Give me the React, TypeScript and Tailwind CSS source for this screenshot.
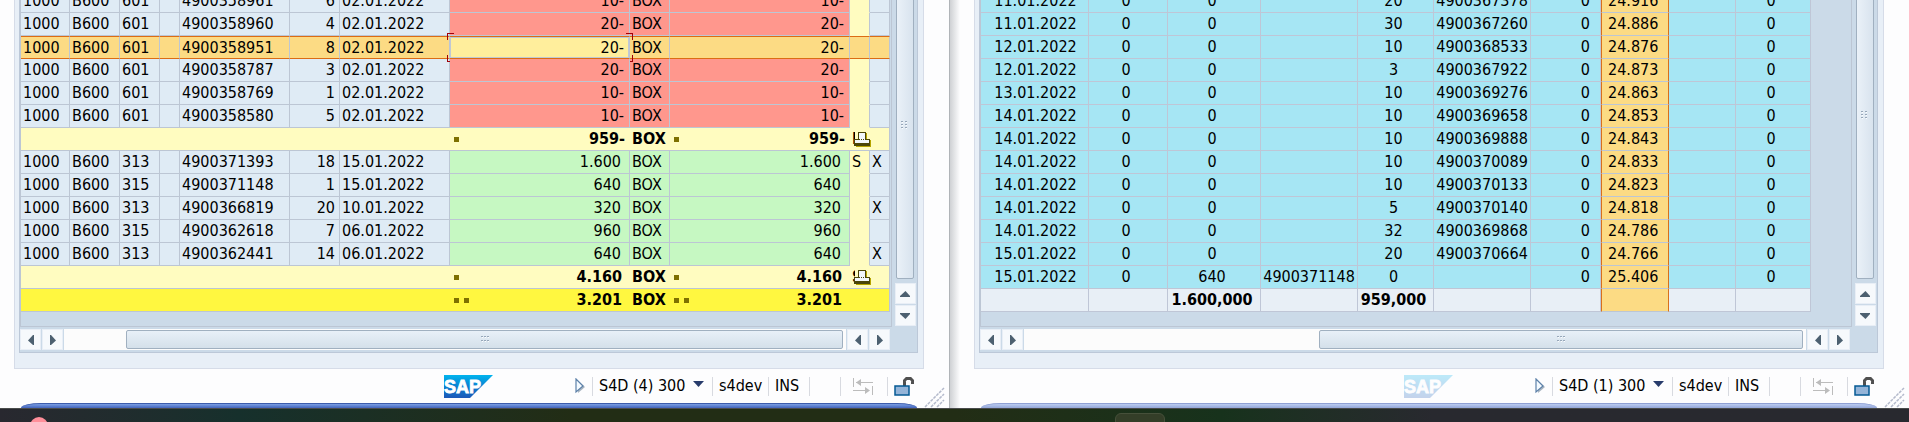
import type { ReactNode } from 'react';

type Movement = {
  type: string;
  doc: string;
  item: string;
  date: string;
  qty: string;
  dc?: string;
  auto?: string;
  selected?: boolean;
};

const ISSUES: Movement[] = [
  { type: '601', doc: '4900358961', item: '6', date: '02.01.2022', qty: '10-' },
  { type: '601', doc: '4900358960', item: '4', date: '02.01.2022', qty: '20-' },
  { type: '601', doc: '4900358951', item: '8', date: '02.01.2022', qty: '20-', selected: true },
  { type: '601', doc: '4900358787', item: '3', date: '02.01.2022', qty: '20-' },
  { type: '601', doc: '4900358769', item: '1', date: '02.01.2022', qty: '10-' },
  { type: '601', doc: '4900358580', item: '5', date: '02.01.2022', qty: '10-' },
];

const RECEIPTS: Movement[] = [
  { type: '313', doc: '4900371393', item: '18', date: '15.01.2022', qty: '1.600', dc: 'S', auto: 'X' },
  { type: '315', doc: '4900371148', item: '1', date: '15.01.2022', qty: '640' },
  { type: '313', doc: '4900366819', item: '20', date: '10.01.2022', qty: '320', auto: 'X' },
  { type: '315', doc: '4900362618', item: '7', date: '06.01.2022', qty: '960' },
  { type: '313', doc: '4900362441', item: '14', date: '06.01.2022', qty: '640', auto: 'X' },
];

// date, opening, received, receipt doc, issued, issue doc, reserved, balance, blank, blocked
const STOCK: string[][] = [
  ['11.01.2022', '0', '0', '', '20', '4900367378', '0', '24.916', '', '0'],
  ['11.01.2022', '0', '0', '', '30', '4900367260', '0', '24.886', '', '0'],
  ['12.01.2022', '0', '0', '', '10', '4900368533', '0', '24.876', '', '0'],
  ['12.01.2022', '0', '0', '', '3', '4900367922', '0', '24.873', '', '0'],
  ['13.01.2022', '0', '0', '', '10', '4900369276', '0', '24.863', '', '0'],
  ['14.01.2022', '0', '0', '', '10', '4900369658', '0', '24.853', '', '0'],
  ['14.01.2022', '0', '0', '', '10', '4900369888', '0', '24.843', '', '0'],
  ['14.01.2022', '0', '0', '', '10', '4900370089', '0', '24.833', '', '0'],
  ['14.01.2022', '0', '0', '', '10', '4900370133', '0', '24.823', '', '0'],
  ['14.01.2022', '0', '0', '', '5', '4900370140', '0', '24.818', '', '0'],
  ['14.01.2022', '0', '0', '', '32', '4900369868', '0', '24.786', '', '0'],
  ['15.01.2022', '0', '0', '', '20', '4900370664', '0', '24.766', '', '0'],
  ['15.01.2022', '0', '640', '4900371148', '0', '', '0', '25.406', '', '0'],
];

const STOCK_TOTAL = ['', '', '1.600,000', '', '959,000', '', '', '', '', ''];

const STOCK_ALIGN = [
  'text-center pl-0.5',
  'text-center pr-1',
  'text-center pr-1',
  'text-center',
  'text-center pr-1',
  'text-center',
  'text-right pr-2.5',
  'text-left pl-1.5',
  'text-left',
  'text-center pr-1',
];

function Squares({ count }: { count: number }) {
  return (
    <span className="flex gap-[5px] pl-1">
      {Array.from({ length: count }, (_, i) => (
        <span key={i} className="size-[5px] bg-[#7d7000]" />
      ))}
    </span>
  );
}

function PrinterIcon() {
  return (
    <svg viewBox="0 0 17 15" className="absolute top-1 left-1 h-[15px] w-[17px]" aria-hidden="true">
      <path d="M1 0h16v15H1z" fill="#fffcc0" />
      <path d="M6 1h7v7h4v7H2v-3h4z" fill="#b5a400" />
      <path d="M4 0h8v7h4v7H0V7h4z" fill="#4a4608" />
      <path d="M5 1h6v7h4v3H1V8h4z" fill="#f2f7fb" />
      <path d="M5 7h1v1H5zM7 7h1v1H7zM9 7h1v1H9z" fill="#4a4608" />
    </svg>
  );
}

function FocusFrame() {
  return (
    <>
      <span className="pointer-events-none absolute inset-0 border border-[#c0c8d4]" />
      <span className="pointer-events-none absolute -top-[4px] -left-[3px] h-[7px] w-[7px] border-t border-l border-[#a00008]" />
      <span className="pointer-events-none absolute -top-[4px] -right-[4px] h-[7px] w-[7px] border-t border-r border-[#a00008]" />
      <span className="pointer-events-none absolute -bottom-[4px] -left-[3px] h-[7px] w-[7px] border-b border-l border-[#a00008]" />
      <span className="pointer-events-none absolute -right-[4px] -bottom-[4px] h-[7px] w-[7px] border-r border-b border-[#a00008]" />
    </>
  );
}

function MovementRow({ row, tone }: { row: Movement; tone: 'red' | 'green' }) {
  const edge = row.selected
    ? 'border-r border-y border-r-[#bcc6d4] border-y-[#dc6c14] leading-[21px]'
    : 'border-r border-b border-[#bcc6d4] leading-[22px]';
  const base = row.selected ? 'bg-[#fcdb84]' : 'bg-[#dfebf5]';
  const qty = row.selected ? 'bg-[#fcdb84]' : tone === 'red' ? 'bg-[#ff978d]' : 'bg-[#c6f8c2]';
  const qtyPad = row.qty.endsWith('-') ? 'pr-[5px]' : 'pr-2';
  const plain = `${edge} ${base} pl-0.5`;
  return (
    <tr>
      <td className={plain}>1000</td>
      <td className={plain}>B600</td>
      <td className={plain}>{row.type}</td>
      <td className={plain} />
      <td className={plain}>{row.doc}</td>
      <td className={`${edge} ${base} pr-1 text-right`}>{row.item}</td>
      <td className={plain}>{row.date}</td>
      <td className={`relative text-right ${edge} ${row.selected ? 'bg-[#ffee9c]' : qty} ${qtyPad}`}>
        {row.qty}
        {row.selected && <FocusFrame />}
      </td>
      <td className={`${edge} ${qty} pl-0.5`}>BOX</td>
      <td className={`${edge} ${qty} ${qtyPad} text-right`}>{row.qty}</td>
      <td
        className={
          row.selected
            ? plain
            : 'border-r border-b border-r-[#bcc6d4] border-b-[#fffcc0] bg-[#fffcc0] pl-0.5 leading-[22px]'
        }
      >
        {row.dc}
      </td>
      <td className={plain}>{row.auto}</td>
    </tr>
  );
}

function SumRow({ value, level, mark }: { value: string; level: 1 | 2; mark?: string }) {
  const fill = level === 2 ? 'bg-[#fff740]' : 'bg-[#fffcc0]';
  const cell = `border-b border-[#bcc6d4] leading-[22px] font-bold ${fill}`;
  const amount = (
    <div className={`flex items-center justify-between ${value.endsWith('-') ? 'pr-[5px]' : 'pr-2'}`}>
      <Squares count={level} />
      <span>{value}</span>
    </div>
  );
  return (
    <tr>
      <td colSpan={7} className={cell} />
      <td className={cell}>{amount}</td>
      <td className={`${cell} pl-0.5`}>BOX</td>
      <td className={cell}>{amount}</td>
      <td colSpan={2} className={`relative border-r pl-0.5 ${cell}`}>
        {mark && (
          <>
            {mark}
            <PrinterIcon />
          </>
        )}
      </td>
    </tr>
  );
}

function MovementTable() {
  return (
    <table aria-label="Material movements" className="w-[869px] table-fixed border-separate border-spacing-0">
      <colgroup>
        <col className="w-[49px]" />
        <col className="w-[50px]" />
        <col className="w-[40px]" />
        <col className="w-[20px]" />
        <col className="w-[110px]" />
        <col className="w-[50px]" />
        <col className="w-[110px]" />
        <col className="w-[180px]" />
        <col className="w-[40px]" />
        <col className="w-[180px]" />
        <col className="w-[20px]" />
        <col className="w-[20px]" />
      </colgroup>
      <tbody>
        {ISSUES.map((row) => (
          <MovementRow key={row.doc} row={row} tone="red" />
        ))}
        <SumRow value="959-" level={1} mark="H" />
        {RECEIPTS.map((row) => (
          <MovementRow key={row.doc} row={row} tone="green" />
        ))}
        <SumRow value="4.160" level={1} mark="S" />
        <SumRow value="3.201" level={2} />
      </tbody>
    </table>
  );
}

function stockEdge(col: number) {
  return col === 7
    ? 'border-x border-b border-x-[#d8701c] border-b-[#bcc6d4] bg-[#fcdb84]'
    : 'border-r border-b border-[#bfc6d6]';
}

function StockTable() {
  return (
    <table aria-label="Stock by day" className="w-[830px] table-fixed border-separate border-spacing-0 leading-[22px]">
      <colgroup>
        <col className="w-[108px]" />
        <col className="w-[79px]" />
        <col className="w-[93px]" />
        <col className="w-[97px]" />
        <col className="w-[76px]" />
        <col className="w-[97px]" />
        <col className="w-[70px]" />
        <col className="w-[68px]" />
        <col className="w-[67px]" />
        <col className="w-[75px]" />
      </colgroup>
      <tbody>
        {STOCK.map((row, r) => (
          <tr key={r} className="bg-[#a6e6f4]">
            {row.map((value, c) => (
              <td key={c} className={`${stockEdge(c)} ${STOCK_ALIGN[c]}`}>
                {value}
              </td>
            ))}
          </tr>
        ))}
        <tr className="h-[23px] bg-[#e8eff6] font-bold">
          {STOCK_TOTAL.map((value, c) => (
            <td key={c} className={`${stockEdge(c)} ${STOCK_ALIGN[c]}`}>
              {value}
            </td>
          ))}
        </tr>
      </tbody>
    </table>
  );
}

const ARROWS = {
  left: 'M9 1v10H8L3 6.500 8 1z',
  right: 'M3 1v10h1l5-4.500L4 1z',
  up: 'M1 9h10V8L6.500 3 1 8z',
  down: 'M1 3h10v1L6.500 9 1 4z',
};

function ScrollButton({ dir }: { dir: keyof typeof ARROWS }) {
  return (
    <button
      type="button"
      aria-label={`Scroll ${dir}`}
      className="flex size-[21px] shrink-0 items-center justify-center border border-[#e8eef6] bg-[#f6f9fc]"
    >
      <svg viewBox="0 0 12 12" className="size-3" aria-hidden="true">
        <path d={ARROWS[dir]} fill="#4c6070" />
      </svg>
    </button>
  );
}

function Grip({ vertical }: { vertical?: boolean }) {
  const xs = vertical ? [0, 4] : [0, 3, 6];
  const ys = vertical ? [0, 3, 6] : [0, 4];
  return (
    <svg viewBox="0 0 8 8" className="size-2" aria-hidden="true">
      {xs.map((x) =>
        ys.map((y) => (
          <g key={`${x}-${y}`}>
            <rect x={x + 1} y={y + 1} width="1" height="1" fill="#fff" />
            <rect x={x} y={y} width="2" height="1" fill="#98a8ba" />
          </g>
        )),
      )}
    </svg>
  );
}

function SapLogo({ faded }: { faded: boolean }) {
  return (
    <svg viewBox="0 0 49 23" className={`h-[23px] w-[49px] ${faded ? 'opacity-25' : ''}`} role="img" aria-label="SAP">
      <defs>
        <linearGradient id="sap" x1="0" y1="0" x2="0" y2="1">
          <stop offset="0" stopColor="#00b4ee" />
          <stop offset="0.5" stopColor="#0c80d0" />
          <stop offset="1" stopColor="#1c58b8" />
        </linearGradient>
      </defs>
      <path d="M0 0h49L26 23H0z" fill="url(#sap)" />
      <text
        x="0"
        y="18"
        fontFamily="Liberation Sans, sans-serif"
        fontWeight="700"
        fontSize="18"
        fill="#fff"
        stroke="#fff"
        strokeWidth="0.800"
      >
        SAP
      </text>
    </svg>
  );
}

function Field({ className, children }: { className: string; children?: ReactNode }) {
  return (
    <div className={`flex h-[19px] items-center border-l border-[#d8dae0] ${className}`}>{children}</div>
  );
}

function StatusBar({ session, faded }: { session: string; faded: boolean }) {
  return (
    <footer className="flex h-[34px] shrink-0 items-center justify-end">
      <div className="mr-[82px]">
        <SapLogo faded={faded} />
      </div>
      <button type="button" aria-label="Expand status bar" className="w-[17px]">
        <svg viewBox="0 0 11 16" className="h-4 w-[11px]" aria-hidden="true">
          <path d="M2 2l8 7-7 6z" fill="#a8b4c0" />
          <path d="M1 1l7 7-7 6z" fill="#f4faff" stroke="#5c80a8" strokeWidth="1.200" />
        </svg>
      </button>
      <Field className="w-[120px] pl-1.5">
        <select aria-label="System" className="w-[94px] appearance-none bg-transparent outline-none">
          <option>{session}</option>
        </select>
        <svg viewBox="0 0 11 6" className="mb-1 h-1.5 w-[11px]" aria-hidden="true">
          <path d="M0 0h11L5.500 6z" fill="#283c6c" />
        </svg>
      </Field>
      <Field className="w-[56px] pl-1.5">s4dev</Field>
      <Field className="w-[41px] pl-1.5">INS</Field>
      <Field className="w-[31px]" />
      <Field className="w-[47px] pl-3">
        <svg viewBox="0 0 21 17" className="h-[17px] w-[21px]" aria-hidden="true">
          <path d="M.5 0v9M19.500 8v9M3 4.500h17M0 12.500h16" stroke="#bcbcbc" fill="none" />
          <path d="M3 4.500L8 1v7zM17 12.500L12 9v7z" fill="#bcbcbc" />
        </svg>
      </Field>
      <Field className="w-[37px] pl-1.5">
        <svg viewBox="0 0 21 19" className="h-[19px] w-[21px]" aria-hidden="true">
          <path d="M10.500 9V3.500l2-2h4l2 2V7" fill="none" stroke="#505050" strokeWidth="3" />
          <rect x="1" y="9" width="14" height="9" fill="#94b4d8" stroke="#045a94" strokeWidth="1.500" />
        </svg>
      </Field>
    </footer>
  );
}

type WindowProps = {
  session: string;
  faded?: boolean;
  className: string;
  track: string;
  thumb: string;
  children: ReactNode;
};

function SapWindow({ session, faded = false, className, track, thumb, children }: WindowProps) {
  return (
    <section aria-label={session} className={`relative flex min-h-0 min-w-0 flex-col bg-[#fdfdfe] ${className}`}>
      <div className="flex min-h-0 flex-1 flex-col border-x border-b border-[#d6dce8] bg-[#e8eff7] pr-[5px] pb-[15px] pl-1">
        <div className="flex min-h-0 flex-1 flex-col border-r border-b border-l border-[#bcc8d8] bg-[#cbdae8]">
          <div className="flex min-h-0 flex-1 overflow-hidden">
            <div className="flex min-w-0 flex-1 flex-col justify-end border-r border-b border-l border-[#bcc6d4] pb-3.5">
              {children}
            </div>
            <div className="flex w-[25px] shrink-0 flex-col items-center pl-px">
              <div
                className={`flex w-[18px] flex-1 items-center justify-center rounded-xs border border-[#a0b0c0] bg-linear-to-r from-[#eaf1f8] to-[#d8e3ee] ${track}`}
              >
                <Grip vertical />
              </div>
              <div className="mt-1 mb-px flex flex-col gap-px">
                <ScrollButton dir="up" />
                <ScrollButton dir="down" />
              </div>
            </div>
          </div>
          <div className="flex h-[25px] shrink-0 items-center gap-px pr-[27px]">
            <ScrollButton dir="left" />
            <ScrollButton dir="right" />
            <div className="flex h-[21px] flex-1 items-center bg-[#fcfcfc] pr-[3px]">
              <div
                className={`flex h-[19px] items-center justify-center rounded-xs border border-[#a0b0c0] bg-linear-to-b from-[#e8f0f8] to-[#d4e0ea] ${thumb}`}
              >
                <Grip />
              </div>
            </div>
            <ScrollButton dir="left" />
            <ScrollButton dir="right" />
          </div>
        </div>
      </div>
      <StatusBar session={session} faded={faded} />
      <div
        className={`mx-[7px] h-[5px] shrink-0 rounded-t-[20px_5px] border-t ${
          faded
            ? 'border-[#8fa0d4] bg-linear-to-b from-[#bccdf2] to-[#94a6d8]'
            : 'border-[#3c5cac] bg-linear-to-b from-[#7c9fe4] to-[#4364bc]'
        }`}
      />
      <svg viewBox="0 0 21 21" className="absolute right-1 bottom-0 size-[21px]" aria-hidden="true">
        <path d="M1 20L20 1M7 20L20 7M13 20l7-7" stroke="#b4bacb" strokeWidth="1.500" strokeDasharray="3 1" />
      </svg>
    </section>
  );
}

export default function App() {
  return (
    <div className="flex h-screen flex-col overflow-hidden bg-white font-['DejaVu_Sans_Condensed','Noto_Sans',sans-serif] text-base leading-[22px] text-black">
      <main className="grid min-h-0 flex-1 grid-cols-[950fr_959fr] grid-rows-[minmax(0,1fr)]">
        <SapWindow
          session="S4D (4) 300"
          className="border-r border-[#b0b4b8] pr-[25px] pl-3.5"
          track="-mt-[30px]"
          thumb="ml-[62px] flex-1"
        >
          <MovementTable />
        </SapWindow>
        <div className="flex min-h-0 min-w-0">
          <div className="w-2.5 shrink-0 bg-linear-to-r from-[#cfd1d4] to-[#fdfdfe]" />
          <SapWindow
            session="S4D (1) 300"
            faded
            className="flex-1 pr-[25px] pl-3.5"
            track="-mt-[50px]"
            thumb="ml-[295px] flex-1"
          >
            <StockTable />
          </SapWindow>
        </div>
      </main>
      <div className="grid h-3.5 shrink-0 grid-cols-2 overflow-hidden border-t border-[#4a4c4c]">
        <div className="flex overflow-hidden bg-linear-to-r from-[#28282f] via-[#16302c] via-25% to-[#222d15] to-60% pl-[30px]">
          <span className="mt-2 size-[18px] shrink-0 rounded-full bg-[#ff8f9a]" />
        </div>
        <div className="flex overflow-hidden bg-linear-to-r from-[#222d15] via-[#17321c] via-28% to-[#28292f] to-50% pl-40">
          <span className="mt-1 h-4 w-[50px] shrink-0 rounded-md border border-[#46503a] bg-[#343e28]" />
        </div>
      </div>
    </div>
  );
}
